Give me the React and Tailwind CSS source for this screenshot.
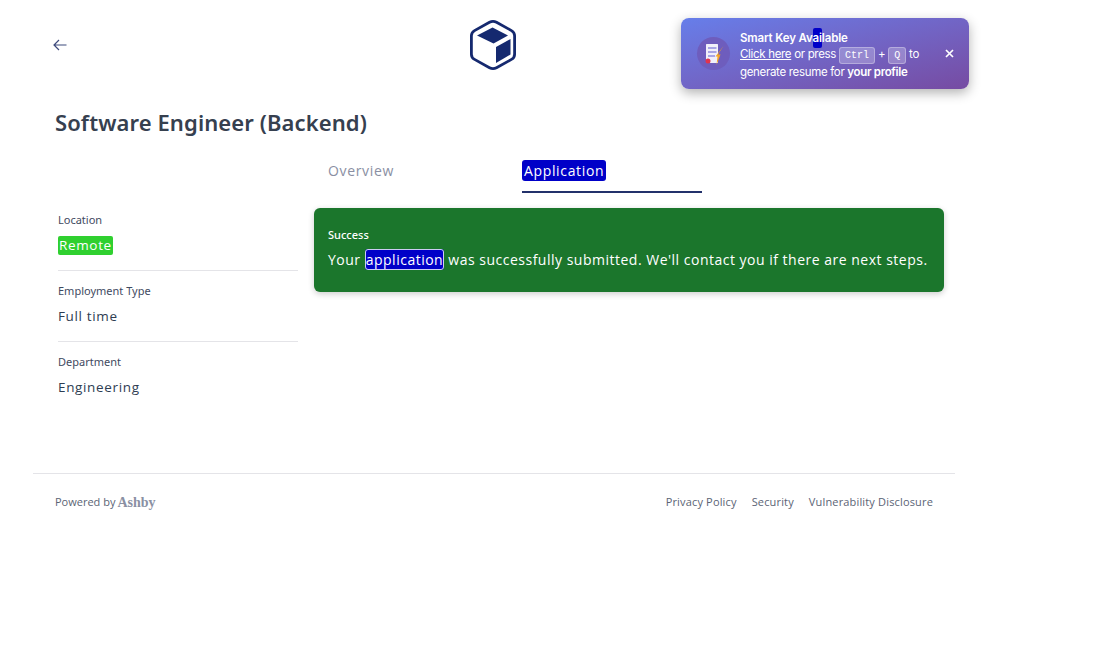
const font = "font-['Noto_Sans',sans-serif]";

function CubeLogo() {
  return (
    <svg width="48" height="52" viewBox="0 0 48 52" fill="none">
      <path d="M20.5 3.3 Q24 1.4 27.5 3.3 L42.5 11.6 Q45.6 13.4 45.6 16.8 V35.2 Q45.6 38.6 42.5 40.4 L27.5 48.7 Q24 50.6 20.5 48.7 L5.5 40.4 Q2.4 38.6 2.4 35.2 V16.8 Q2.4 13.4 5.5 11.6 Z" stroke="#15296f" strokeWidth="2.8" />
      <path d="M23.5 8.5 L39 16.5 L24.5 24.5 L8 16.5 Z" fill="#15296f" />
      <path d="M41.5 20 V35.5 L27 44 V28 Z" fill="#15296f" />
    </svg>
  );
}

function ResumeIcon() {
  return (
    <div className="w-[33px] h-[33px] rounded-full bg-[#6e5dbd] flex items-center justify-center">
      <svg width="24" height="26" viewBox="0 0 24 26">
        <rect x="4" y="3" width="12" height="19" rx="0.5" fill="#f1f0fa" />
        <rect x="6" y="6" width="8.5" height="2" fill="#a9a6e6" />
        <rect x="6" y="10" width="8.5" height="2" fill="#a9a6e6" />
        <rect x="6" y="14" width="7" height="2" fill="#a9a6e6" />
        <path d="M21.5 5 L16 13.5 H18.5 L14.5 24 L15.5 15.5 H13.5 Z" fill="#f5a524" />
        <circle cx="6" cy="20" r="2.5" fill="#e0344e" />
      </svg>
    </div>
  );
}

function Key({ children }) {
  return (
    <span className="inline-flex items-center justify-center h-[17px] px-[5px] rounded-[3px] border border-white/30 bg-white/25 font-['Liberation_Mono',monospace] text-[10px] font-normal tracking-normal">
      {children}
    </span>
  );
}

function SmartKeyToast() {
  return (
    <div className="absolute left-[681px] top-[18px] w-[288px] h-[71px] rounded-[8px] bg-gradient-to-br from-[#667eea] to-[#764ba2] shadow-[0_4px_12px_rgba(0,0,0,0.3)] flex items-center pl-[16px] pr-[14px] text-white font-['Inter',sans-serif] text-[11.5px] leading-[16px] tracking-[-0.32px]">
      <ResumeIcon />
      <div className="ml-[10px] flex-1 pt-[3px]">
        <div className="font-semibold tracking-[-0.15px]">
          Smart Key Av<span className="bg-[#0000c8] rounded-[2px] py-[3px]">ai</span>lable
        </div>
        <div className="whitespace-nowrap">
          <span className="underline">Click here</span> or press <Key>Ctrl</Key> + <Key>Q</Key> to
        </div>
        <div>
          generate resume for <span className="font-semibold">your profile</span>
        </div>
      </div>
      <svg width="9" height="9" viewBox="0 0 9 9" className="shrink-0 mr-[1px]" stroke="#fff" strokeWidth="1.7">
        <path d="M1 1 L8 8 M8 1 L1 8" />
      </svg>
    </div>
  );
}

function Info({ label, children, border }) {
  return (
    <div className={`pb-[10px] mb-[12px] ${border ? "border-b border-[#e4e4e8]" : ""}`}>
      <div className="text-[11px] leading-[16px] text-[#3f4a5f] mb-[2px] font-['Noto_Sans',sans-serif]">{label}</div>
      <div className="h-[30px] flex items-center font-['Open_Sans',sans-serif] text-[13.5px] tracking-[0.65px] text-[#2e3d52]">{children}</div>
    </div>
  );
}

export default function App() {
  return (
    <div className={`relative h-[650px] w-[1096px] bg-white overflow-hidden ${font}`}>
      <SmartKeyToast />
      <div className="ml-[33px] w-[922px]">
        <div className="h-[90px] relative flex items-center justify-center pr-[2px]">
          <div className="absolute left-[20px] top-[38px]">
            <svg width="14" height="14" viewBox="0 0 14 14" fill="none" stroke="#3d4a7c" strokeWidth="1.2">
              <path d="M13.5 7 H1 M6 2 L1 7 L6 12" />
            </svg>
          </div>
          <CubeLogo />
        </div>
        <h1 className="pl-[22px] text-[22px] leading-[32px] font-semibold tracking-[0.1px] text-[#36404f] mt-[16px]">Software Engineer (Backend)</h1>
        <div className="flex mt-[21px]">
          <div className="w-[281px] pl-[25px] pr-[16px] pt-[53px]">
            <Info label="Location" border>
              <span className="bg-[#2fd02f] text-white rounded-[2px] px-[1px] leading-[19px]">Remote</span>
            </Info>
            <Info label="Employment Type" border>Full time</Info>
            <Info label="Department">Engineering</Info>
          </div>
          <div className="w-[630px]">
            <div className="flex pl-[14px] h-[34px] font-['Open_Sans',sans-serif] text-[14px] tracking-[0.65px]">
              <div className="w-[194px] pt-[1px] text-[#8a8fa3]">Overview</div>
              <div className="w-[180px] pt-[1px] border-b-2 border-[#23316b] text-white">
                <span className="bg-[#0000c8] rounded-[3px] px-[2px] py-[1px]">Application</span>
              </div>
            </div>
            <div className="mt-[15px] h-[84px] rounded-[6px] bg-[#1b762c] shadow-[0_2px_6px_rgba(0,0,0,0.2)] px-[14px] pt-[19px] text-white">
              <div className="text-[11px] leading-[15px] font-medium">Success</div>
              <div className="mt-[8px] font-['Open_Sans',sans-serif] text-[14px] leading-[20px] tracking-[0.5px] whitespace-nowrap">
                Your <span className="bg-[#0000c8] rounded-[3px] border border-white/80">application</span> was successfully submitted. We'll contact you if there are next steps.
              </div>
            </div>
          </div>
        </div>
        <div className="mt-[49px] border-t border-[#e4e4e8] pt-[18px] pl-[22px] pr-[22px] flex items-center justify-between text-[11px] text-[#5b6475] font-['Open_Sans',sans-serif]">
          <div className="flex items-center gap-[2px]">
            <span>Powered by</span>
            <span className="font-['Liberation_Serif',serif] font-bold text-[14px] text-[#8a90a3]">Ashby</span>
          </div>
          <div className="flex gap-[15px] tracking-[0.16px]">
            <span>Privacy Policy</span>
            <span>Security</span>
            <span>Vulnerability Disclosure</span>
          </div>
        </div>
      </div>
    </div>
  );
}
